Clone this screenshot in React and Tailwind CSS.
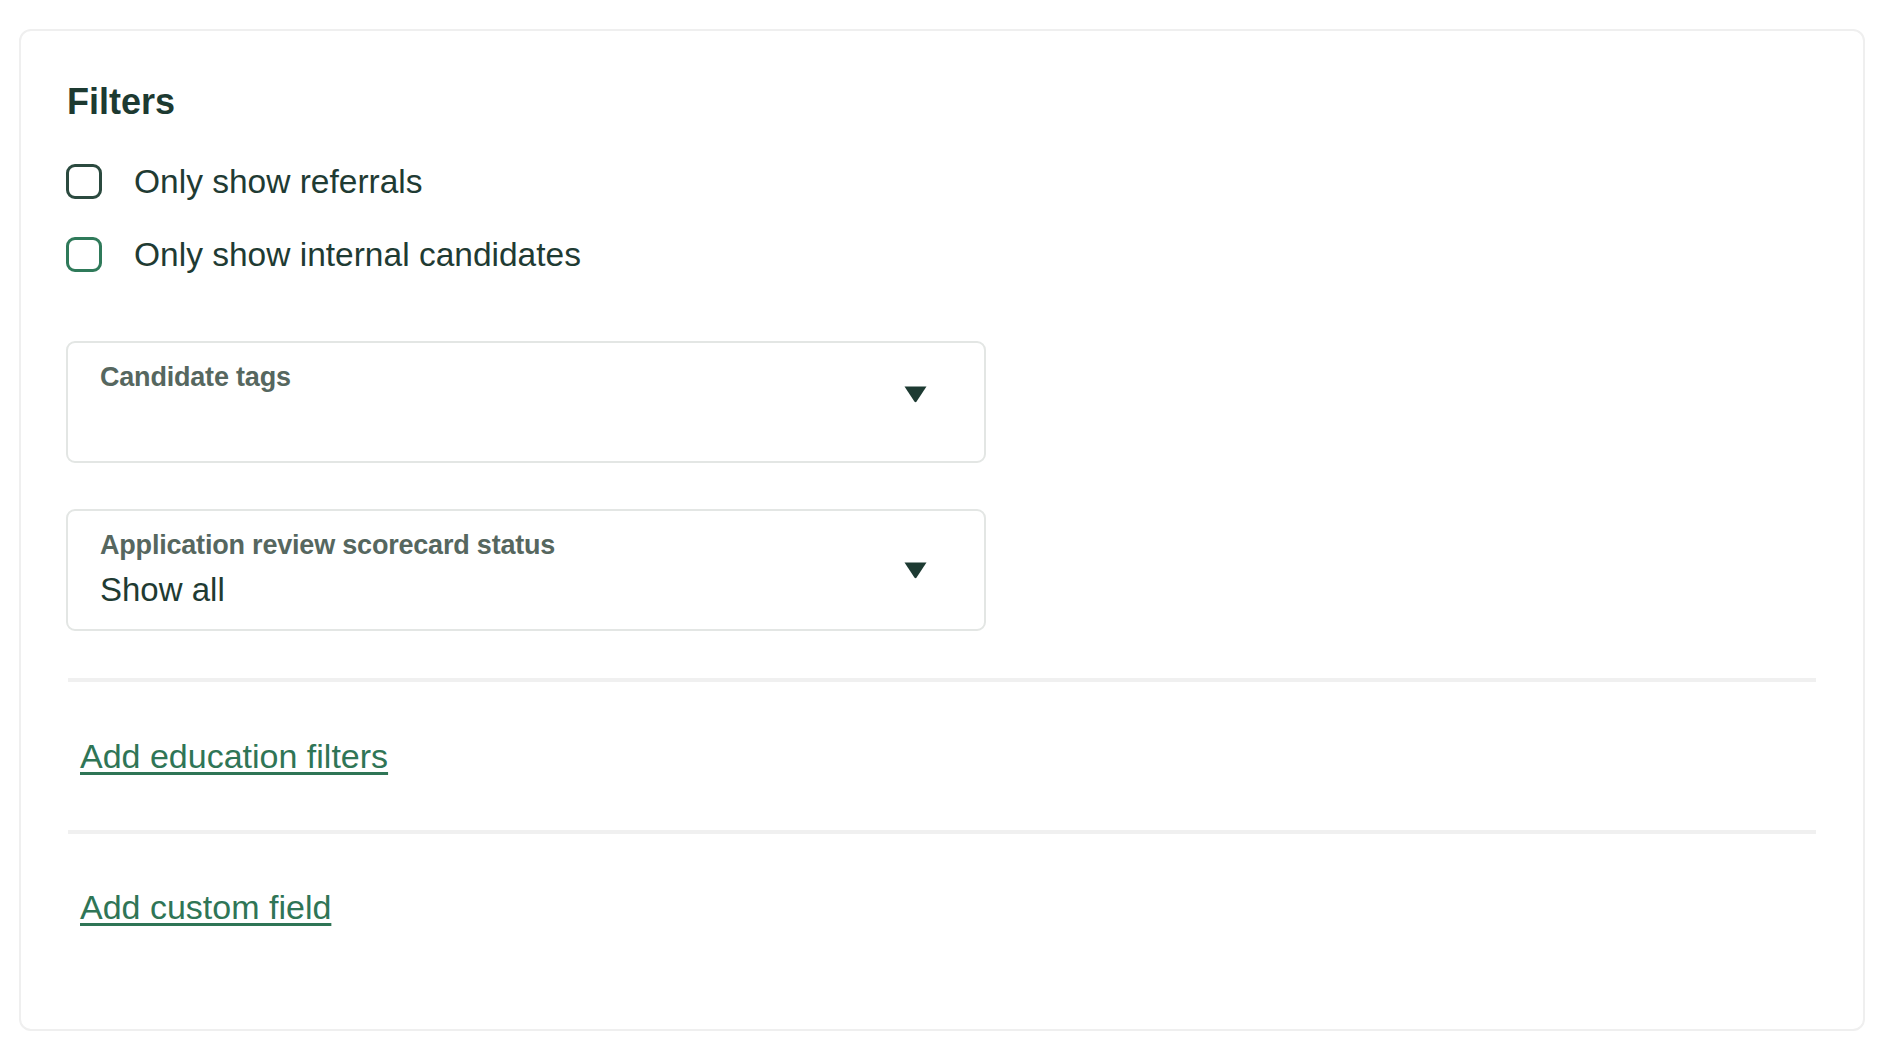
import React from 'react';

const font = { fontFamily: '"Liberation Sans", Arial, sans-serif' };

const Checkbox = ({ label, focused }) => (
  <label className="flex items-center gap-[32px] h-[35px] cursor-pointer">
    <span
      className={
        'w-[36px] h-[35px] rounded-[9px] border-[3px] bg-white shrink-0 ' +
        (focused ? 'border-[#2f7a5a]' : 'border-[#2b4a3f]')
      }
    />
    <span className="text-[33.5px] leading-[35px] text-[#1f3b33]">{label}</span>
  </label>
);

const Caret = () => (
  <svg width="23" height="17" viewBox="0 0 23 17" className="block">
    <path d="M0.5 0.5 H22.5 L12.6 15.6 Q11.5 17 10.4 15.6 Z" fill="#1d3a32" />
  </svg>
);

const SelectBox = ({ label, value, caretTop }) => (
  <div className="relative w-[920px] h-[122px] rounded-[9px] border-2 border-[#e3e6e4] bg-white pt-[18px] px-[32px]">
    <div className="text-[27px] leading-[32px] font-bold text-[#56675f] tracking-[-0.2px]">{label}</div>
    <div className="mt-[9px] h-[40px] text-[33px] leading-[40px] text-[#1f3b33]">{value}</div>
    <div className={'absolute right-[57px] ' + caretTop}>
      <Caret />
    </div>
  </div>
);

export default function App() {
  return (
    <div className="min-h-screen bg-white pt-[29px] pl-[19px]" style={font}>
      <div className="w-[1846px] h-[1002px] rounded-[12px] border-2 border-[#efefef] bg-white pt-[49px] px-[45px]">
        {/* Header */}
        <h2 className="text-[36px] leading-[44px] font-bold text-[#1d3a31] pl-[1px]">Filters</h2>

        {/* Toggles */}
        <div className="mt-[40px] flex flex-col gap-[38px]">
          <Checkbox label="Only show referrals" />
          <Checkbox label="Only show internal candidates" focused />
        </div>

        {/* Dropdowns */}
        <div className="mt-[69px] flex flex-col gap-[46px]">
          <SelectBox label="Candidate tags" value="" caretTop="top-[43px]" />
          <SelectBox label="Application review scorecard status" value="Show all" caretTop="top-[51px]" />
        </div>

        <div className="mt-[47px] mx-[2px] h-[4px] bg-[#f0f0f0]" />
        <div className="pt-[54px] pb-[54px] pl-[14px]">
          <a
            href="#"
            className="text-[34px] leading-[40px] text-[#2f7556] underline decoration-[3px] underline-offset-[4px]"
          >
            Add education filters
          </a>
        </div>
        <div className="mx-[2px] h-[4px] bg-[#f0f0f0]" />
        <div className="pt-[53px] pl-[14px]">
          <a
            href="#"
            className="text-[34px] leading-[40px] text-[#2f7556] underline decoration-[3px] underline-offset-[4px]"
          >
            Add custom field
          </a>
        </div>
      </div>
    </div>
  );
}
